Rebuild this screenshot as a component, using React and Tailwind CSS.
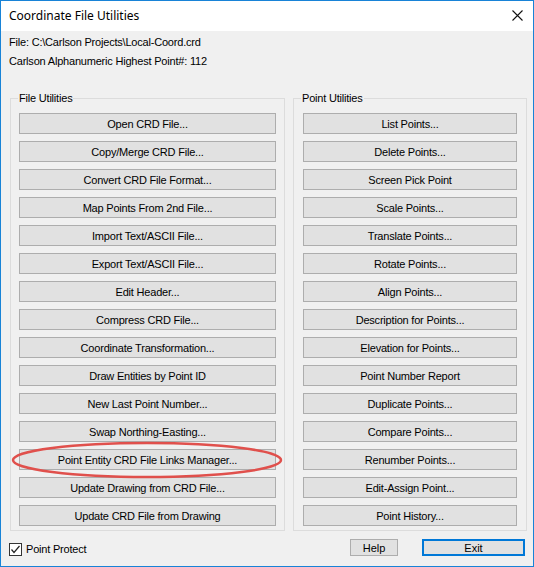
import React from "react";

const fileButtons = [
  "Open CRD File...",
  "Copy/Merge CRD File...",
  "Convert CRD File Format...",
  "Map Points From 2nd File...",
  "Import Text/ASCII File...",
  "Export Text/ASCII File...",
  "Edit Header...",
  "Compress CRD File...",
  "Coordinate Transformation...",
  "Draw Entities by Point ID",
  "New Last Point Number...",
  "Swap Northing-Easting...",
  "Point Entity CRD File Links Manager...",
  "Update Drawing from CRD File...",
  "Update CRD File from Drawing",
];

const pointButtons = [
  "List Points...",
  "Delete Points...",
  "Screen Pick Point",
  "Scale Points...",
  "Translate Points...",
  "Rotate Points...",
  "Align Points...",
  "Description for Points...",
  "Elevation for Points...",
  "Point Number Report",
  "Duplicate Points...",
  "Compare Points...",
  "Renumber Points...",
  "Edit-Assign Point...",
  "Point History...",
];

function Btn({ label }) {
  return (
    <button className="h-[21px] w-full bg-[#e1e1e1] border border-[#adadad] flex items-center justify-center text-[11px] leading-[14px] text-black tracking-[-0.2px]">
      {label}
    </button>
  );
}

function Group({ title, items, className, pad }) {
  return (
    <fieldset className={`border border-[#dcdcdc] ${className}`}>
      <legend className="ml-[7px] px-[1px] text-[11px] leading-[14px] text-black tracking-[-0.2px]">{title}</legend>
      <div className={`flex flex-col gap-[7px] pt-[8px] pb-[4px] ${pad}`}>
        {items.map(t => <Btn key={t} label={t} />)}
      </div>
    </fieldset>
  );
}

export default function App() {
  return (
    <div className="relative w-[534px] h-[567px] border border-[#1883d7] bg-[#f0f0f0] flex flex-col overflow-hidden" style={{ fontFamily: '"Liberation Sans", Arial, sans-serif' }}>
      {/* title bar */}
      <div className="h-[30px] bg-white flex items-center justify-between pl-[8px] pr-[10px] shrink-0">
        <span className="text-[12px] text-black" style={{ fontFamily: '"Noto Sans", sans-serif' }}>Coordinate File Utilities</span>
        <svg width="11" height="11" viewBox="0 0 11 11" className="mt-[-1px]">
          <path d="M0.5 0.5 L10.5 10.5 M10.5 0.5 L0.5 10.5" stroke="#111" strokeWidth="1.1" />
        </svg>
      </div>

      {/* info */}
      <div className="pt-[2px] pl-[8px] text-[11px] text-black tracking-[-0.2px]">
        <div className="h-[19px] flex items-center">File: C:\Carlson Projects\Local-Coord.crd</div>
        <div className="h-[19px] flex items-center">Carlson Alphanumeric Highest Point#: 112</div>
      </div>

      {/* groups */}
      <div className="flex gap-[8px] mt-[20px] ml-[9px]">
        <Group title="File Utilities" items={fileButtons} className="w-[275px]" pad="px-[8px]" />
        <Group title="Point Utilities" items={pointButtons} className="w-[234px]" pad="px-[9px]" />
      </div>

      {/* bottom row */}
      <div className="flex items-start pt-[8px] pl-[8px] pr-[8px]">
        <label className="flex items-center gap-[4px] mt-[2px] text-[11px] text-black tracking-[-0.2px]">
          <span className="w-[13px] h-[13px] border border-[#333] bg-white flex items-center justify-center">
            <svg width="11" height="11" viewBox="0 0 11 11">
              <path d="M1.5 5.5 L4 8.5 L9.5 2" fill="none" stroke="#222" strokeWidth="1.2" />
            </svg>
          </span>
          Point Protect
        </label>
        <button className="ml-auto w-[48px] h-[17px] bg-[#e1e1e1] border border-[#adadad] text-[11px] leading-[14px] text-black flex items-center justify-center">Help</button>
        <button className="ml-[24px] w-[103px] h-[17px] bg-[#e1e1e1] border-2 border-[#0078d7] text-[11px] leading-[14px] text-black flex items-center justify-center">Exit</button>
      </div>

      {/* red annotation */}
      <svg className="absolute left-0 top-0 pointer-events-none" width="534" height="567">
        <ellipse cx="146" cy="459" rx="134" ry="17" fill="none" stroke="#e0504c" strokeWidth="2.5" />
      </svg>
    </div>
  );
}
